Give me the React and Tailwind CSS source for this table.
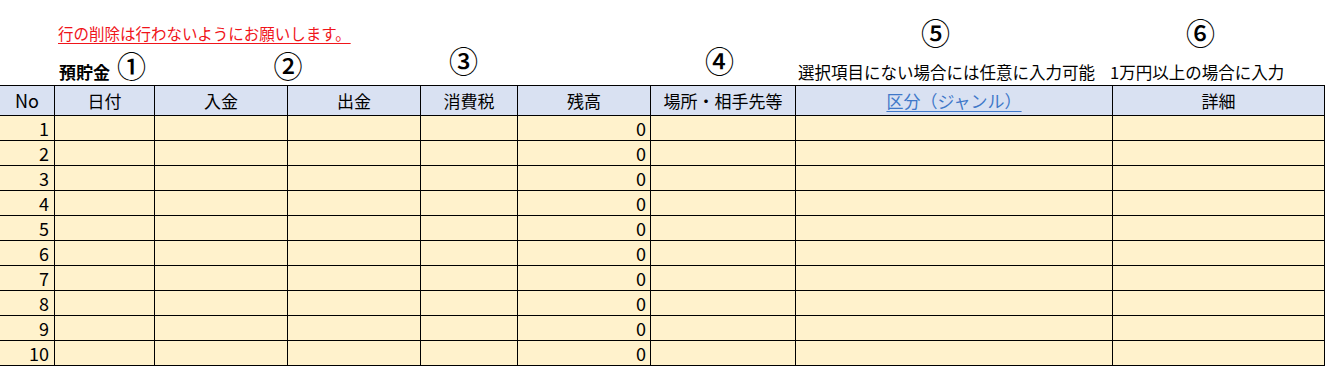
const COLS = 'grid grid-cols-[55px_100px_133px_133px_97px_133px_145px_317px_212px]'
const JP = "font-['Noto_Sans_CJK_JP',sans-serif]"
const NUM = "font-['Noto_Sans_CJK_JP',sans-serif]"

const headers = ['日付', '入金', '出金', '消費税', '残高', '場所・相手先等']
const rows = [1, 2, 3, 4, 5, 6, 7, 8, 9, 10]

function Circled({ children, className = '' }) {
  return (
    <span className={`${JP} text-[29px] leading-none font-medium text-black ${className}`}>
      {children}
    </span>
  )
}

export default function App() {
  return (
    <div className={`w-[1325px] h-[366px] bg-white overflow-hidden text-black ${JP}`}>
      {/* notes above the sheet */}
      <div className={`${COLS} h-[45px]`}>
        <div />
        <div className="col-span-6 pl-[3px] pt-[21px]">
          <span className="text-[15.5px] leading-none text-[#F0141A] underline underline-offset-[3px] decoration-1">
            行の削除は行わないようにお願いします。
          </span>
        </div>
        <div className="col-span-2 flex pt-[18px]">
          <Circled className="ml-[125px]">⑤</Circled>
          <Circled className="ml-[236px]">⑥</Circled>
        </div>
      </div>

      <div className={`${COLS} h-[40px]`}>
        <div />
        <div className="flex items-start pl-[4px]">
          <span className="pt-[18px] text-[17px] leading-none font-bold">預貯金</span>
          <Circled className="ml-[7px] mt-[6px]">①</Circled>
        </div>
        <div className="col-span-2 flex justify-center pt-[6px]">
          <Circled>②</Circled>
        </div>
        <div className="flex justify-center pr-[12px] pt-[1px]">
          <Circled>③</Circled>
        </div>
        <div />
        <div className="flex justify-center pr-[8px] pt-[1px]">
          <Circled>④</Circled>
        </div>
        <div className="col-span-2 flex items-start pl-[2px] pt-[19px]">
          <span className="text-[16.5px] leading-none">選択項目にない場合には任意に入力可能</span>
          <span className="ml-[15px] text-[16.5px] leading-none">1万円以上の場合に入力</span>
        </div>
      </div>

      {/* sheet */}
      <div className={`${COLS} border-t border-black`}>
        <div className={`${NUM} h-[30px] flex items-center justify-center border-r border-b border-black bg-[#D9E1F2] text-[18px]`}>
          No
        </div>
        {headers.map((h) => (
          <div
            key={h}
            className="h-[30px] flex items-center justify-center border-r border-b border-black bg-[#D9E1F2] text-[17px]"
          >
            {h}
          </div>
        ))}
        <div className="h-[30px] flex items-center justify-center border-r border-b border-black bg-[#D9E1F2] text-[17px]">
          <span className="text-[#3F78C9] underline underline-offset-[3px] decoration-1">区分（ジャンル）</span>
        </div>
        <div className="h-[30px] flex items-center justify-center border-r border-b border-black bg-[#D9E1F2] text-[17px]">
          詳細
        </div>

        {rows.map((n) => (
          <div key={n} className="contents">
            <div className={`${NUM} h-[25px] flex items-center justify-end pr-[5px] border-r border-b border-black bg-[#FFF2CC] text-[18px]`}>
              {n}
            </div>
            <div className="h-[25px] border-r border-b border-black bg-[#FFF2CC]" />
            <div className="h-[25px] border-r border-b border-black bg-[#FFF2CC]" />
            <div className="h-[25px] border-r border-b border-black bg-[#FFF2CC]" />
            <div className="h-[25px] border-r border-b border-black bg-[#FFF2CC]" />
            <div className={`${NUM} h-[25px] flex items-center justify-end pr-[4px] border-r border-b border-black bg-[#FFF2CC] text-[18px]`}>
              0
            </div>
            <div className="h-[25px] border-r border-b border-black bg-[#FFF2CC]" />
            <div className="h-[25px] border-r border-b border-black bg-[#FFF2CC]" />
            <div className="h-[25px] border-r border-b border-black bg-[#FFF2CC]" />
          </div>
        ))}
      </div>
    </div>
  )
}
